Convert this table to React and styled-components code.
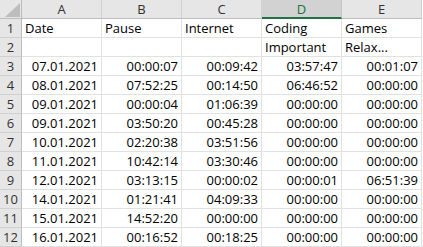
import React from 'react'
import styled, { createGlobalStyle } from 'styled-components'

const GlobalStyle = createGlobalStyle`
    html, body {
        margin: 0;
        padding: 0;
        background: #fff;
    }
    body {
        font-family: "Open Sans", "Liberation Sans", Arial, sans-serif;
    }
`

const columns = ['A', 'B', 'C', 'D', 'E']

const rows = [
    ['Date', 'Pause', 'Internet', 'Coding', 'Games'],
    ['', '', '', 'Important', 'Relax...'],
    ['07.01.2021', '00:00:07', '00:09:42', '03:57:47', '00:01:07'],
    ['08.01.2021', '07:52:25', '00:14:50', '06:46:52', '00:00:00'],
    ['09.01.2021', '00:00:04', '01:06:39', '00:00:00', '00:00:00'],
    ['09.01.2021', '03:50:20', '00:45:28', '00:00:00', '00:00:00'],
    ['10.01.2021', '02:20:38', '03:51:56', '00:00:00', '00:00:00'],
    ['11.01.2021', '10:42:14', '03:30:46', '00:00:00', '00:00:00'],
    ['12.01.2021', '03:13:15', '00:00:02', '00:00:01', '06:51:39'],
    ['14.01.2021', '01:21:41', '04:09:33', '00:00:00', '00:00:00'],
    ['15.01.2021', '14:52:20', '00:00:00', '00:00:00', '00:00:00'],
    ['16.01.2021', '00:16:52', '00:18:25', '00:00:00', '00:00:00'],
]

// header rows are text, everything after is right aligned like excel numbers
const isNumberRow = (i) => i >= 2

export default function App() {
    return (
        <>
            <GlobalStyle />
            <Sheet>
                <Corner>
                    <svg width="22" height="19" viewBox="0 0 22 19">
                        <polygon points="5,17 20,17 20,3" fill="#bdbdbd" />
                    </svg>
                </Corner>
                {columns.map((c) => (
                    <ColHeader key={c} $active={c === 'D'}>{c}</ColHeader>
                ))}
                {rows.map((row, i) => (
                    <React.Fragment key={i}>
                        <RowHeader>{i + 1}</RowHeader>
                        {row.map((val, j) => (
                            <Cell key={j} $right={isNumberRow(i)}>{val}</Cell>
                        ))}
                    </React.Fragment>
                ))}
            </Sheet>
        </>
    )
}

const Sheet = styled.div`
    display: grid;
    grid-template-columns: 22px repeat(5, 80px);
    grid-auto-rows: 19px;
    width: 423px;
    height: 247px;
    overflow: hidden;
    font-size: 13px;
    line-height: 17px;
    color: #000;
`

const Corner = styled.div`
    background: #e6e6e6;
    border-right: 1px solid #bdbdbd;
    border-bottom: 1px solid #bdbdbd;
    box-sizing: border-box;
    svg {
        display: block;
    }
`

const ColHeader = styled.div`
    display: flex;
    align-items: center;
    justify-content: center;
    box-sizing: border-box;
    background: ${(p) => (p.$active ? '#d2d2d2' : '#e6e6e6')};
    color: ${(p) => (p.$active ? '#217346' : '#333')};
    border-right: 1px solid ${(p) => (p.$active ? '#c6c6c6' : '#d0d0d0')};
    border-bottom: ${(p) => (p.$active ? '2px solid #217346' : '1px solid #bdbdbd')};
    padding-top: ${(p) => (p.$active ? '1px' : '0')};
`

const RowHeader = styled.div`
    display: flex;
    align-items: flex-end;
    justify-content: center;
    box-sizing: border-box;
    background: #e6e6e6;
    color: #333;
    border-right: 1px solid #bdbdbd;
    border-bottom: 1px solid #d0d0d0;
    padding-bottom: 0;
`

const Cell = styled.div`
    display: flex;
    align-items: flex-end;
    justify-content: ${(p) => (p.$right ? 'flex-end' : 'flex-start')};
    box-sizing: border-box;
    border-right: 1px solid #e1e1e1;
    border-bottom: 1px solid #e1e1e1;
    padding: 0 3px 0 3px;
    white-space: nowrap;
    overflow: hidden;
`
